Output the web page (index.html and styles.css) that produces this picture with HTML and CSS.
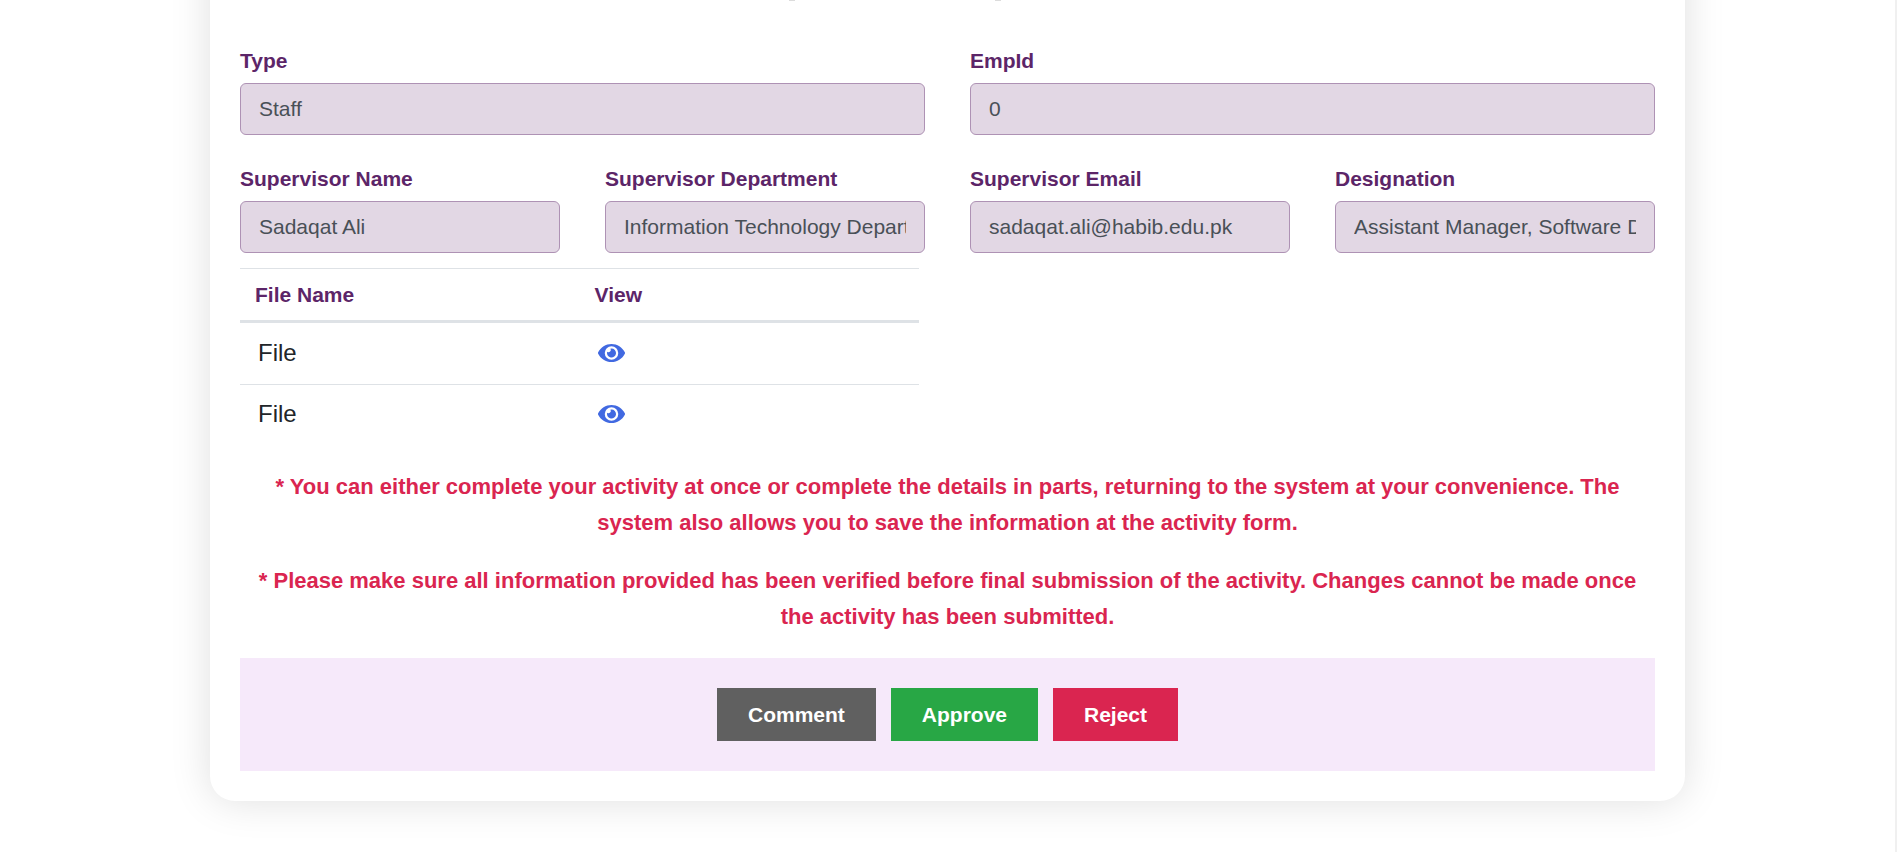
FILE: index.html
```
<!DOCTYPE html>
<html lang="en">
<head>
<meta charset="utf-8">
<meta name="viewport" content="width=device-width, initial-scale=1">
<title>Activity approval</title>
<link rel="stylesheet" href="styles.css">
</head>
<body>
<svg class="sprite" aria-hidden="true">
  <symbol id="eye" viewBox="0 0 576 512">
    <path d="M572.52 241.4C518.29 135.59 410.93 64 288 64S57.68 135.64 3.48 241.41a32.35 32.35 0 0 0 0 29.19C57.71 376.41 165.07 448 288 448s230.32-71.64 284.52-177.41a32.35 32.35 0 0 0 0-29.19zM288 400a144 144 0 1 1 144-144 143.93 143.93 0 0 1-144 144zm0-240a95.31 95.31 0 0 0-25.31 3.79 47.85 47.85 0 0 1-66.9 66.9A95.78 95.78 0 1 0 288 160z"/>
  </symbol>
</svg>
<main class="page">
  <form class="card">
    <svg class="card-mark" viewBox="0 0 318 1" aria-hidden="true">
      <path d="M0 0h6v1H0zM206 0h6v1h-6z"/>
    </svg>
    <div class="fields fields-two">
      <div class="field">
        <label for="type">Type</label>
        <input id="type" type="text" value="Staff" readonly>
      </div>
      <div class="field">
        <label for="emp-id">EmpId</label>
        <input id="emp-id" type="text" value="0" readonly>
      </div>
    </div>
    <div class="fields fields-four">
      <div class="field">
        <label for="sup-name">Supervisor Name</label>
        <input id="sup-name" type="text" value="Sadaqat Ali" readonly>
      </div>
      <div class="field">
        <label for="sup-dept">Supervisor Department</label>
        <input id="sup-dept" type="text" value="Information Technology Department" readonly>
      </div>
      <div class="field">
        <label for="sup-email">Supervisor Email</label>
        <input id="sup-email" type="email" value="sadaqat.ali@habib.edu.pk" readonly>
      </div>
      <div class="field">
        <label for="designation">Designation</label>
        <input id="designation" type="text" value="Assistant Manager, Software Development" readonly>
      </div>
    </div>
    <table class="files">
      <thead>
        <tr><th scope="col">File Name</th><th scope="col">View</th></tr>
      </thead>
      <tbody>
        <tr><td>File</td><td><a class="view" href="#" aria-label="View file"><svg class="icon"><use href="#eye"/></svg></a></td></tr>
        <tr><td>File</td><td><a class="view" href="#" aria-label="View file"><svg class="icon"><use href="#eye"/></svg></a></td></tr>
      </tbody>
    </table>
    <div class="notes">
      <p>* You can either complete your activity at once or complete the details in parts, returning to the system at your convenience. The system also allows you to save the information at the activity form.</p>
      <p>* Please make sure all information provided has been verified before final submission of the activity. Changes cannot be made once the activity has been submitted.</p>
    </div>
    <div class="actions">
      <button class="btn btn-comment" type="button">Comment</button>
      <button class="btn btn-approve" type="button">Approve</button>
      <button class="btn btn-reject" type="button">Reject</button>
    </div>
  </form>
</main>
</body>
</html>
```
FILE: styles.css
```
* {
  box-sizing: border-box;
}

body {
  margin: 0;
  min-height: 100vh;
  overflow: hidden;
  border-right: 2px solid #f0f0f0;
  background: #fff;
  color: #212529;
  font-family: "Liberation Sans", Arial, sans-serif;
  font-size: 24px;
  line-height: 36px;
}

.sprite {
  display: none;
}

.page {
  display: flex;
  padding: 0 210px 48px;
}

/* The top of the card is scrolled out of view. */
.card {
  flex: 1;
  min-width: 0;
  margin-top: -60px;
  padding: 60px 30px 30px;
  border-radius: 25px;
  background: #fff;
  box-shadow: 0 0 40px rgba(0, 0, 0, 0.13);
}

.card-mark {
  display: block;
  width: 318px;
  height: 1px;
  margin: 0 auto 44px;
  fill: #dcdcdc;
}

.fields {
  display: grid;
  column-gap: 45px;
}

.fields-two {
  grid-template-columns: repeat(2, minmax(0, 1fr));
  margin-bottom: 28px;
}

.fields-four {
  grid-template-columns: repeat(4, minmax(0, 1fr));
  margin-bottom: 15px;
}

.field {
  display: flex;
  flex-direction: column;
  gap: 7px;
}

.field label {
  color: #5c2568;
  font-size: 21px;
  font-weight: 700;
  line-height: 31px;
}

.field input {
  width: 100%;
  height: 52px;
  margin: 0;
  padding: 0 18px;
  border: 1px solid #ae92b4;
  border-radius: 6px;
  outline: 0;
  background: #e2d7e4;
  color: #495057;
  font: inherit;
  font-size: 21px;
}

.files {
  width: 48%;
  border-spacing: 0;
  table-layout: fixed;
}

.files th {
  padding: 10px 15px;
  border-top: 1px solid #dee2e6;
  border-bottom: 3px solid #dee2e6;
  color: #5c2568;
  font-size: 21px;
  line-height: 31px;
  text-align: left;
}

.files td {
  height: 61px;
  padding: 0 18px 2px;
}

.files tr + tr td {
  border-top: 1px solid #dee2e6;
}

.view {
  display: flex;
  color: #4169e1;
}

.icon {
  width: 27px;
  height: 24px;
  fill: currentColor;
}

.notes {
  display: grid;
  gap: 22px;
  margin: 24px 0 23px;
  color: #da2550;
  font-size: 22px;
  font-weight: 700;
  text-align: center;
}

.notes p {
  margin: 0;
}

.actions {
  display: flex;
  justify-content: center;
  gap: 15px;
  padding: 30px;
  background: #f6e9fa;
}

.btn {
  height: 53px;
  padding: 0 31px;
  border: 0;
  color: #fff;
  font: inherit;
  font-size: 21px;
  font-weight: 700;
}

.btn-comment {
  background: #606060;
}

.btn-approve {
  background: #28a745;
}

.btn-reject {
  background: #da2550;
}
```
